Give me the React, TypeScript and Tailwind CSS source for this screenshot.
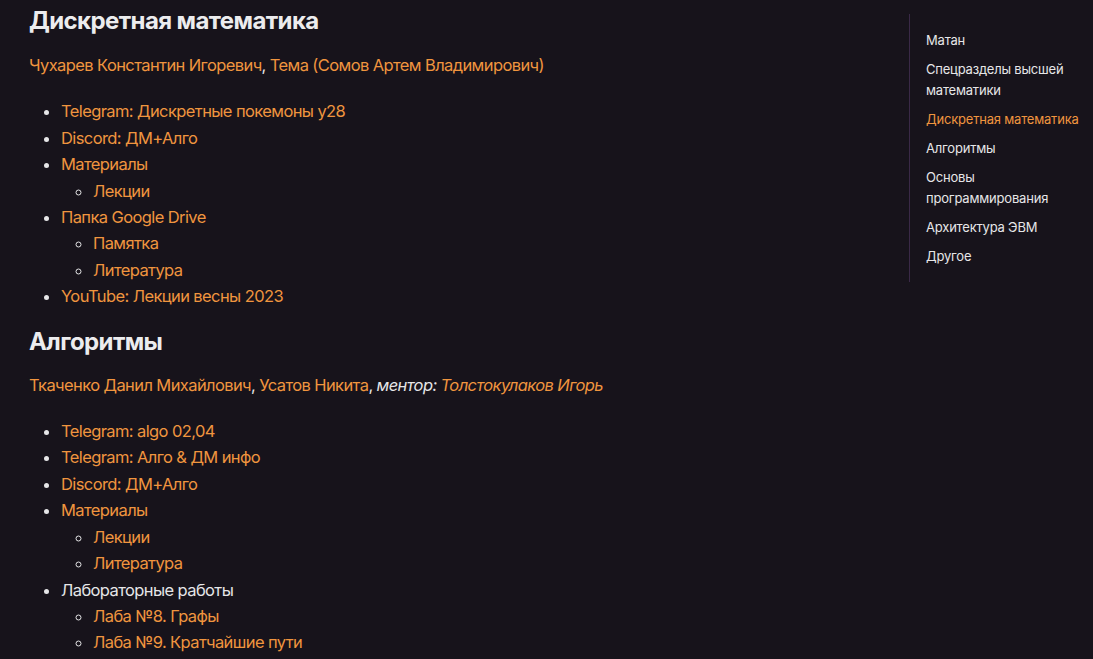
import React from "react";

const A = ({ children }: { children: React.ReactNode }) => (
  <a className="text-[#f0953f]">{children}</a>
);

type Item = { t: string; link?: boolean; sub?: string[] };

const List = ({ items, cls }: { items: Item[]; cls: string }) => (
  <ul className={`list-disc pl-8 marker:text-[#e6e6e8] ${cls}`}>
    {items.map((it, i) => (
      <li key={i} className="pl-0">
        {it.link === false ? <span className="text-[#e6e6e8]">{it.t}</span> : <A>{it.t}</A>}
        {it.sub && (
          <ul className="list-[circle] pl-8 marker:text-[#c8c8cc]">
            {it.sub.map((s, j) => (
              <li key={j}>
                <A>{s}</A>
              </li>
            ))}
          </ul>
        )}
      </li>
    ))}
  </ul>
);

const toc = [
  ["Матан"],
  ["Спецразделы высшей", "математики"],
  ["Дискретная математика"],
  ["Алгоритмы"],
  ["Основы", "программирования"],
  ["Архитектура ЭВМ"],
  ["Другое"],
];

export default function App() {
  return (
    <div
      className="w-[1093px] h-[659px] overflow-hidden bg-[#17131b] text-[#e6e6e8] flex"
      style={{ fontFamily: "Inter, 'Noto Sans', sans-serif" }}
    >
      <main className="flex-1 pl-[29px] text-[16.5px] leading-[26.4px] tracking-[-0.6px]">
        <h1 className="text-[24px] leading-[42px] font-bold text-[#ececee] tracking-[-0.6px]">
          Дискретная математика
        </h1>
        <p className="mt-[10px]">
          <A>Чухарев Константин Игоревич</A>, <A>Тема (Сомов Артем Владимирович)</A>
        </p>
        <List
          cls="mt-[20px]"
          items={[
            { t: "Telegram: Дискретные покемоны y28" },
            { t: "Discord: ДМ+Алго" },
            { t: "Материалы", sub: ["Лекции"] },
            { t: "Папка Google Drive", sub: ["Памятка", "Литература"] },
            { t: "YouTube: Лекции весны 2023" },
          ]}
        />
        <h2 className="mt-[14px] text-[24px] leading-[36px] font-bold text-[#ececee] tracking-[-0.6px]">
          Алгоритмы
        </h2>
        <p className="mt-[12px]">
          <A>Ткаченко Данил Михайлович</A>, <A>Усатов Никита</A>, <em>ментор: </em>
          <em>
            <A>Толстокулаков Игорь</A>
          </em>
        </p>
        <List
          cls="mt-[20px]"
          items={[
            { t: "Telegram: algo 02,04" },
            { t: "Telegram: Алго & ДМ инфо" },
            { t: "Discord: ДМ+Алго" },
            { t: "Материалы", sub: ["Лекции", "Литература"] },
            { t: "Лабораторные работы", link: false, sub: ["Лаба №8. Графы", "Лаба №9. Кратчайшие пути"] },
          ]}
        />
      </main>
      <aside className="w-[184px] shrink-0 pt-[14px]">
        <nav className="border-l border-[#3a2947] pl-4 pt-[16px] pb-[15px] flex flex-col gap-2 text-[13px] leading-[21px] tracking-[-0.2px]">
          {toc.map((lines, i) => (
            <div key={i} className={i === 2 ? "text-[#f0953f] whitespace-nowrap" : "text-[#e6e6e8]"}>
              {lines.map((l, j) => (
                <div key={j}>{l}</div>
              ))}
            </div>
          ))}
        </nav>
      </aside>
    </div>
  );
}
